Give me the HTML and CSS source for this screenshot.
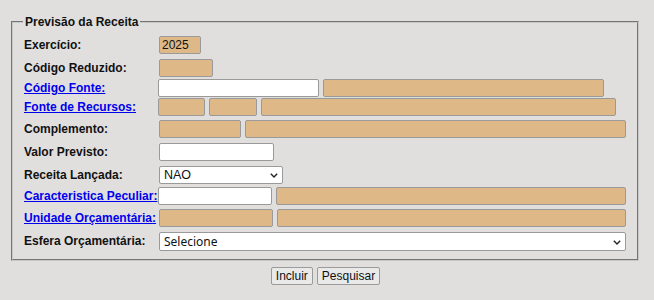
FILE: index.html
```html
<!DOCTYPE html>
<html lang="pt">
<head>
<meta charset="utf-8">
<title>Previsão da Receita</title>
<link rel="stylesheet" href="styles.css">
</head>
<body>
<div class="page">
  <fieldset class="box">
    <legend class="legend">Previsão da Receita</legend>
    <div class="form">
      <div class="lbl">Exercício:</div>
      <div class="fld in1"><input class="ro w42" value="2025" readonly></div>

      <div class="lbl">Código Reduzido:</div>
      <div class="fld in1"><input class="ro w54" readonly></div>

      <div class="lbl"><a href="#" class="lnk">Código Fonte:</a></div>
      <div class="fld"><input class="txt w161"><input class="ro w281" readonly></div>

      <div class="lbl"><a href="#" class="lnk">Fonte de Recursos:</a></div>
      <div class="fld"><input class="ro w47" readonly><input class="ro w48" readonly><input class="ro w355" readonly></div>

      <div class="lbl">Complemento:</div>
      <div class="fld in1"><input class="ro w82" readonly><input class="ro w381" readonly></div>

      <div class="lbl">Valor Previsto:</div>
      <div class="fld in1"><input class="txt w115"></div>

      <div class="lbl">Receita Lançada:</div>
      <div class="fld in1">
        <span class="selwrap w124">
          <select class="sel"><option>NAO</option><option>SIM</option></select>
          <svg class="chev" width="8" height="5" viewBox="0 0 8 5"><path d="M0.8 0.8 L4 4 L7.2 0.8" fill="none" stroke="#222" stroke-width="1.4"/></svg>
        </span>
      </div>

      <div class="lbl"><a href="#" class="lnk">Caracteristica Peculiar:</a></div>
      <div class="fld"><input class="txt w114"><input class="ro w350" readonly></div>

      <div class="lbl"><a href="#" class="lnk">Unidade Orçamentária:</a></div>
      <div class="fld in1"><input class="ro w114" readonly><input class="ro w349" readonly></div>

      <div class="lbl">Esfera Orçamentária:</div>
      <div class="fld in1 tall">
        <span class="selwrap w467">
          <select class="sel sel-wide"><option>Selecione</option></select>
          <svg class="chev" width="8" height="5" viewBox="0 0 8 5"><path d="M0.8 0.8 L4 4 L7.2 0.8" fill="none" stroke="#222" stroke-width="1.4"/></svg>
        </span>
      </div>
    </div>
  </fieldset>
  <div class="actions">
    <button class="btn" type="button">Incluir</button>
    <button class="btn" type="button">Pesquisar</button>
  </div>
</div>
</body>
</html>
```

FILE: styles.css
```css
html, body {
  margin: 0;
  padding: 0;
  background: #e0dfde;
}

.page {
  padding: 15px 15px 0 11px;
  font-family: "Liberation Sans", Arial, sans-serif;
  font-size: 12px;
  color: #111;
}

.box {
  margin: 0;
  padding: 7px 10px 8px 10px;
  border: 2px groove #c8c8c8;
  min-width: 0;
}

.legend {
  padding: 0 2px;
  font-weight: bold;
  font-size: 12px;
  line-height: 14px;
  color: #111;
}

.form {
  display: grid;
  grid-template-columns: 135px 1fr;
  grid-template-rows: 23px 20px 19px 22px 23px 23px 21px 22px 23px 19px;
  align-items: start;
}

.lbl {
  height: 18px;
  display: flex;
  align-items: center;
  padding-left: 1px;
  font-weight: bold;
  white-space: nowrap;
}

.lnk {
  color: #0000ee;
  text-decoration: underline;
}

.fld {
  display: flex;
  gap: 4px;
  height: 18px;
  align-items: stretch;
}

.fld.tall {
  height: 19px;
}

.in1 {
  padding-left: 1px;
}

input {
  box-sizing: border-box;
  height: 18px;
  margin: 0;
  padding: 0 2px;
  border: 1px solid #9a9a9a;
  border-radius: 2px;
  font-family: "Liberation Sans", Arial, sans-serif;
  font-size: 12px;
  color: #111;
  outline: none;
}

.ro {
  background: #deb887;
}

.txt {
  background: #ffffff;
}

.selwrap {
  position: relative;
  display: block;
  height: 100%;
}

.sel {
  -webkit-appearance: none;
  appearance: none;
  box-sizing: border-box;
  width: 100%;
  height: 100%;
  margin: 0;
  padding: 0 16px 0 4px;
  border: 1px solid #9a9a9a;
  border-radius: 2px;
  background: #ffffff;
  font-family: "Liberation Sans", Arial, sans-serif;
  font-size: 12.5px;
  color: #111;
  outline: none;
}

.sel-wide {
  font-family: "Noto Sans", "Open Sans", sans-serif;
  font-size: 12px;
}

.chev {
  position: absolute;
  right: 5px;
  top: 50%;
  margin-top: -2px;
  pointer-events: none;
}

.w42 { width: 42px; }
.w47 { width: 47px; }
.w48 { width: 48px; }
.w54 { width: 54px; }
.w82 { width: 82px; }
.w114 { width: 114px; }
.w115 { width: 115px; }
.w124 { width: 124px; }
.w161 { width: 161px; }
.w281 { width: 281px; }
.w349 { width: 349px; }
.w350 { width: 350px; }
.w355 { width: 355px; }
.w381 { width: 381px; }
.w467 { width: 467px; }

.actions {
  display: flex;
  justify-content: center;
  gap: 4px;
  margin-top: 6px;
  padding-left: 1px;
}

.btn {
  box-sizing: border-box;
  height: 18px;
  margin: 0;
  padding: 0 4px;
  border: 1px solid #9a9a9a;
  border-radius: 2px;
  background: #e9e9e9;
  font-family: "Liberation Sans", Arial, sans-serif;
  font-size: 12px;
  color: #111;
}
```
